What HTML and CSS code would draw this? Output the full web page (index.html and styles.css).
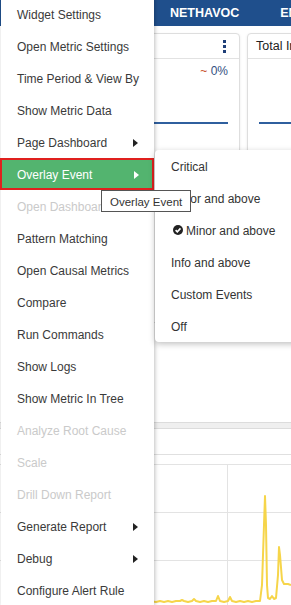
FILE: index.html
```html
<!DOCTYPE html>
<html lang="en">
<head>
    <meta charset="UTF-8">
    <meta name="viewport" content="width=device-width, initial-scale=1.0">
    <title>Dashboard Widget Menu</title>
    <link rel="stylesheet" href="styles.css">
</head>
<body>
    <div class="page">
        <div class="topbar">
            <span class="tab">NETHAVOC</span>
            <span class="tab">ENTERPRISE</span>
        </div>

        <div class="cards">
            <div class="card card-wide">
                <div class="card-head">
                    <span class="kebab"><i></i><i></i><i></i></span>
                </div>
                <div class="card-body">
                    <div class="delta"><span class="tilde">~</span> 0%</div>
                    <div class="trend"></div>
                </div>
            </div>
            <div class="card">
                <div class="card-head">
                    <span class="card-title">Total Incidents</span>
                </div>
                <div class="card-body">
                    <div class="delta"></div>
                    <div class="trend"></div>
                </div>
            </div>
        </div>

        <div class="panel">
            <div class="panel-strip"></div>
            <div class="panel-head"></div>
            <svg class="chart" width="291" height="150" viewBox="0 0 291 150">
                <line x1="0" y1="9.5" x2="291" y2="9.5" class="grid"/>
                <line x1="0" y1="57.5" x2="291" y2="57.5" class="grid"/>
                <line x1="0" y1="105.5" x2="291" y2="105.5" class="grid"/>
                <line x1="227.5" y1="9" x2="227.5" y2="150" class="grid"/>
                <polyline class="series" points="150,146 156,147 160,146 164,147 168,146 172,147 176,146 180,146 182,145 184,146 188,147 192,146 194,144 196,146 200,147 204,146 208,147 212,146 216,146 218,141 220,146 224,147 228,146 230,142 232,146 236,147 240,146 244,147 248,146 252,147 256,146 260,146 262,130 264,70 265,41 266,70 267,130 268,143 270,144 272,141 274,144 276,143 278,120 279,92 280,100 282,125 284,129 288,129 291,130"/>
            </svg>
        </div>
    </div>

    <!-- widget context menu -->
    <ul class="menu">
        <li>Widget Settings</li>
        <li>Open Metric Settings</li>
        <li>Time Period &amp; View By</li>
        <li>Show Metric Data</li>
        <li class="has-sub">Page Dashboard <span class="caret"></span></li>
        <li class="has-sub active">Overlay Event <span class="caret"></span></li>
        <li class="disabled">Open Dashboard</li>
        <li>Pattern Matching</li>
        <li>Open Causal Metrics</li>
        <li>Compare</li>
        <li>Run Commands</li>
        <li>Show Logs</li>
        <li>Show Metric In Tree</li>
        <li class="disabled">Analyze Root Cause</li>
        <li class="disabled">Scale</li>
        <li class="disabled">Drill Down Report</li>
        <li class="has-sub">Generate Report <span class="caret"></span></li>
        <li class="has-sub">Debug <span class="caret"></span></li>
        <li>Configure Alert Rule</li>
    </ul>

    <ul class="submenu">
        <li>Critical</li>
        <li>Major and above</li>
        <li class="checked">
            <svg class="check" width="10" height="10" viewBox="0 0 10 10">
                <circle cx="5" cy="5" r="5" fill="#222"/>
                <path d="M2.6 5.1 L4.3 6.8 L7.5 3.4" fill="none" stroke="#fff" stroke-width="1.6"/>
            </svg>
            Minor and above
        </li>
        <li>Info and above</li>
        <li>Custom Events</li>
        <li>Off</li>
    </ul>

    <div class="tooltip">Overlay Event</div>
</body>
</html>
```

FILE: styles.css
```css
html, body {
    margin: 0;
    width: 291px;
    height: 605px;
    overflow: hidden;
}
body {
    font-family: "Liberation Sans", Arial, sans-serif;
    font-size: 12px;
    color: #333;
    background-color: #fff;
    position: relative;
}
.topbar {
    height: 26px;
    background-color: #1f4f8c;
    display: flex;
    align-items: center;
    gap: 41px;
    padding-left: 170px;
    white-space: nowrap;
}
.tab {
    color: #fff;
    font-weight: bold;
    font-size: 12.5px;
}
.cards {
    display: flex;
    gap: 7px;
    padding: 7px 0 0 5px;
    overflow: hidden;
}
.card {
    flex: 0 0 235px;
    height: 290px;
    box-sizing: border-box;
    border: 1px solid #dedede;
    border-radius: 4px;
    box-shadow: 0 1px 3px rgba(0, 0, 0, 0.08);
    background-color: #fff;
}
.card-head {
    height: 24px;
    border-bottom: 1px solid #e2e2e2;
    display: flex;
    align-items: center;
    justify-content: flex-end;
    padding: 0 13px 0 8px;
}
.card-title {
    margin-right: auto;
    color: #222;
    font-size: 12.5px;
    white-space: nowrap;
}
.kebab {
    display: flex;
    flex-direction: column;
    gap: 2px;
}
.kebab i {
    width: 3px;
    height: 3px;
    background-color: #1f3f78;
}
.card-body {
    padding: 5px 11px 0 11px;
}
.delta {
    height: 14px;
    line-height: 14px;
    text-align: right;
    color: #34507f;
}
.tilde {
    color: #c8502a;
}
.trend {
    margin-top: 44px;
    height: 2px;
    background-color: #2f5f9e;
}
.panel {
    margin-top: 99px;
}
.panel-strip {
    height: 5px;
    background-color: #efefef;
    border-top: 1px solid #dcdcdc;
    border-bottom: 1px solid #dcdcdc;
}
.panel-head {
    height: 25px;
    border-bottom: 1px solid #e0e0e0;
}
.chart {
    display: block;
}
.grid {
    stroke: #e3e3e3;
    stroke-width: 1;
}
.series {
    fill: none;
    stroke: #f6d54a;
    stroke-width: 2;
    stroke-linejoin: round;
}

/* context menu */
.menu {
    position: absolute;
    top: -2px;
    left: 1px;
    width: 153px;
    margin: 0;
    padding: 0;
    list-style: none;
    background-color: #fff;
    box-shadow: 1px 0 4px rgba(0, 0, 0, 0.25);
    z-index: 2;
}
.menu li {
    height: 32px;
    box-sizing: border-box;
    display: flex;
    align-items: center;
    justify-content: space-between;
    padding: 2px 16px 0 16px;
    white-space: nowrap;
    color: #3a3a3a;
}
.menu li.disabled {
    color: #cacaca;
}
.menu li.active {
    margin-left: -1px;
    padding-left: 15px;
    padding-right: 13px;
    background-color: #53b46f;
    border: 2px solid #e0201e;
    color: #fff;
}
.caret {
    width: 0;
    height: 0;
    border-left: 5px solid #222;
    border-top: 4.5px solid transparent;
    border-bottom: 4.5px solid transparent;
}
.active .caret {
    border-left-color: #fff;
}
.submenu {
    position: absolute;
    top: 150px;
    left: 155px;
    width: 150px;
    margin: 0;
    padding: 0;
    list-style: none;
    background-color: #fff;
    border-radius: 4px;
    box-shadow: 0 2px 6px rgba(0, 0, 0, 0.25);
    z-index: 3;
}
.submenu li {
    height: 32px;
    box-sizing: border-box;
    display: flex;
    align-items: center;
    padding: 2px 0 0 16px;
    white-space: nowrap;
    color: #333;
}
.submenu li.checked {
    padding-left: 18px;
    gap: 3px;
}
.check {
    margin-top: -3px;
}
.tooltip {
    position: absolute;
    top: 190px;
    left: 101px;
    padding: 4px 8px 2px;
    line-height: 14px;
    font-size: 11.5px;
    color: #333;
    background-color: #fff;
    border: 1px solid #555;
    white-space: nowrap;
    z-index: 4;
}
```
